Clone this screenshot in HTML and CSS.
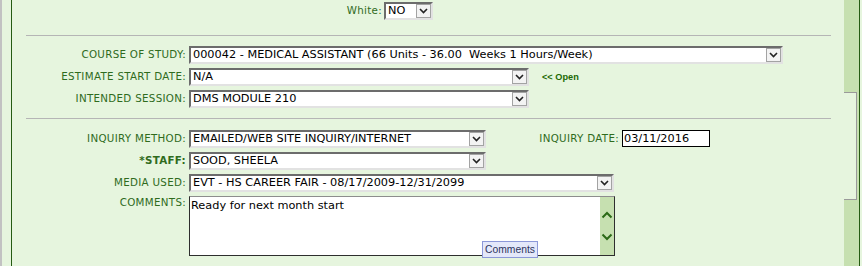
FILE: index.html
```html
<!DOCTYPE html>
<html>
<head>
<meta charset="utf-8">
<link rel="stylesheet" href="styles.css">
</head>
<body>
<div class="page">
  <div class="edge"></div>
  <div class="gutter"></div>
  <div class="vline"></div>
  <main class="form">
    <div class="row">
      <span class="lbl lbl-white">White:</span>
      <div class="sel w-white"><span class="val">NO</span><span class="btn"><svg width="9" height="6" viewBox="0 0 9 6"><path d="M1 1 L4.5 4.5 L8 1" fill="none" stroke="#222" stroke-width="1.6"/></svg></span></div>
    </div>
    <div class="sep sep-a"></div>
    <div class="group">
      <div class="row">
        <span class="lbl">COURSE OF STUDY:</span>
        <div class="sel w-course"><span class="val">000042 - MEDICAL ASSISTANT (66 Units - 36.00&nbsp; Weeks 1 Hours/Week)</span><span class="btn"><svg width="9" height="6" viewBox="0 0 9 6"><path d="M1 1 L4.5 4.5 L8 1" fill="none" stroke="#222" stroke-width="1.6"/></svg></span></div>
      </div>
      <div class="row">
        <span class="lbl">ESTIMATE START DATE:</span>
        <div class="sel w-mid"><span class="val">N/A</span><span class="btn"><svg width="9" height="6" viewBox="0 0 9 6"><path d="M1 1 L4.5 4.5 L8 1" fill="none" stroke="#222" stroke-width="1.6"/></svg></span></div>
        <a class="open">&lt;&lt; Open</a>
      </div>
      <div class="row">
        <span class="lbl">INTENDED SESSION:</span>
        <div class="sel w-mid"><span class="val">DMS MODULE 210</span><span class="btn"><svg width="9" height="6" viewBox="0 0 9 6"><path d="M1 1 L4.5 4.5 L8 1" fill="none" stroke="#222" stroke-width="1.6"/></svg></span></div>
      </div>
    </div>
    <div class="sep sep-b"></div>
    <div class="group">
      <div class="row">
        <span class="lbl">INQUIRY METHOD:</span>
        <div class="sel w-short"><span class="val">EMAILED/WEB SITE INQUIRY/INTERNET</span><span class="btn"><svg width="9" height="6" viewBox="0 0 9 6"><path d="M1 1 L4.5 4.5 L8 1" fill="none" stroke="#222" stroke-width="1.6"/></svg></span></div>
        <span class="lbl lbl-date">INQUIRY DATE:</span>
        <div class="txt">03/11/2016</div>
      </div>
      <div class="row">
        <span class="lbl lbl-bold">*STAFF:</span>
        <div class="sel w-short"><span class="val">SOOD, SHEELA</span><span class="btn"><svg width="9" height="6" viewBox="0 0 9 6"><path d="M1 1 L4.5 4.5 L8 1" fill="none" stroke="#222" stroke-width="1.6"/></svg></span></div>
      </div>
      <div class="row">
        <span class="lbl">MEDIA USED:</span>
        <div class="sel w-long"><span class="val">EVT - HS CAREER FAIR - 08/17/2009-12/31/2099</span><span class="btn"><svg width="9" height="6" viewBox="0 0 9 6"><path d="M1 1 L4.5 4.5 L8 1" fill="none" stroke="#222" stroke-width="1.6"/></svg></span></div>
      </div>
      <div class="row row-top">
        <span class="lbl lbl-top">COMMENTS:</span>
        <div class="ta">
          <div class="ta-text">Ready for next month start</div>
          <div class="ta-scroll">
            <svg width="12" height="8" viewBox="0 0 12 8"><path d="M1.5 6.5 L6 2 L10.5 6.5" fill="none" stroke="#2b6a16" stroke-width="2"/></svg>
            <svg width="12" height="8" viewBox="0 0 12 8"><path d="M1.5 1.5 L6 6 L10.5 1.5" fill="none" stroke="#2b6a16" stroke-width="2"/></svg>
          </div>
          <div class="tip">Comments</div>
        </div>
      </div>
    </div>
  </main>
  <div class="vscroll">
    <div class="track-top"></div>
    <div class="thumb"></div>
  </div>
  <div class="vline"></div>
  <div class="edge2"></div>
</div>
</body>
</html>
```
FILE: styles.css
```css
html, body {
  margin: 0;
  padding: 0;
  height: 266px;
  overflow: hidden;
  background: #e6f5de;
}
.page {
  display: flex;
  height: 266px;
  font-family: "DejaVu Sans", Verdana, sans-serif;
}
.edge {
  width: 2px;
  background: #c2c2c2;
}
.gutter {
  width: 9px;
}
.vline {
  width: 1px;
  background: #255b12;
}
.edge2 {
  width: 2px;
}
.form {
  flex: 1;
  padding-top: 2px;
  display: flex;
  flex-direction: column;
}
.group {
  display: flex;
  flex-direction: column;
  gap: 4px;
}
.row {
  display: flex;
  align-items: baseline;
}
.row-top {
  align-items: flex-start;
}
.lbl {
  width: 174px;
  margin-right: 3px;
  text-align: right;
  font-size: 10.3px;
  letter-spacing: 0.3px;
  color: #2f6b1d;
  white-space: nowrap;
  flex: none;
}
.lbl-white {
  width: 370px;
  margin-right: 2px;
}
.lbl-bold {
  font-weight: bold;
}
.lbl-top {
  line-height: 13px;
}
.lbl-date {
  width: 133px;
  margin-right: 3px;
}
.sep {
  height: 1px;
  background: #b5b5b5;
  margin-left: 14px;
  width: 805px;
  flex: none;
}
.sep-a {
  margin-top: 15px;
  margin-bottom: 10px;
}
.sep-b {
  margin-top: 10px;
  margin-bottom: 11px;
}
.sel {
  display: flex;
  height: 18px;
  box-sizing: border-box;
  border: 2px solid;
  border-color: #6c6c6c #e2e2e2 #e2e2e2 #6c6c6c;
  background: #fff;
  font-size: 11.3px;
  color: #000;
  flex: none;
}
.sel .val {
  flex: 1;
  padding-left: 2px;
  line-height: 14px;
  white-space: nowrap;
  overflow: hidden;
}
.sel .btn {
  width: 15px;
  height: 14px;
  box-sizing: border-box;
  border: 1px solid #a3a3a3;
  background: #f3f3f3;
  display: flex;
  align-items: center;
  justify-content: center;
}
.w-white { width: 49px; }
.w-course { width: 594px; }
.w-mid { width: 340px; }
.w-short { width: 297px; }
.w-long { width: 425px; }
.open {
  margin-left: 13px;
  font-family: "Liberation Sans", Arial, sans-serif;
  font-weight: bold;
  font-size: 9.2px;
  color: #1d6a05;
}
.txt {
  width: 88px;
  height: 17px;
  box-sizing: border-box;
  border: 1px solid #000;
  background: #fff;
  padding-left: 1px;
  font-size: 11.3px;
  line-height: 15px;
  color: #000;
}
.ta {
  position: relative;
  display: flex;
  width: 426px;
  height: 60px;
  box-sizing: border-box;
  border: 1px solid #2e2e2e;
  border-top-color: #8d8d8d;
  background: #fff;
}
.ta-text {
  flex: 1;
  padding: 2px 0 0 1px;
  font-size: 11.3px;
  line-height: 14px;
  color: #000;
}
.ta-scroll {
  width: 14px;
  background: #c6e0b0;
  display: flex;
  flex-direction: column;
  align-items: center;
  padding-top: 14px;
  gap: 14px;
  box-sizing: border-box;
}
.tip {
  position: absolute;
  left: 292px;
  top: 44px;
  width: 56px;
  height: 17px;
  box-sizing: border-box;
  border: 1px solid #8c98d8;
  background: #e4e8fa;
  font-family: "Liberation Sans", Arial, sans-serif;
  font-size: 10.3px;
  line-height: 15px;
  text-align: center;
  color: #2e3560;
}
.vscroll {
  width: 15px;
  background: #c6e0b0;
  display: flex;
  flex-direction: column;
}
.track-top {
  height: 92px;
}
.thumb {
  width: 13px;
  height: 108px;
  box-sizing: border-box;
  background: #e6f5de;
  border: 1px solid #9a9a9a;
  border-left: none;
}
```
